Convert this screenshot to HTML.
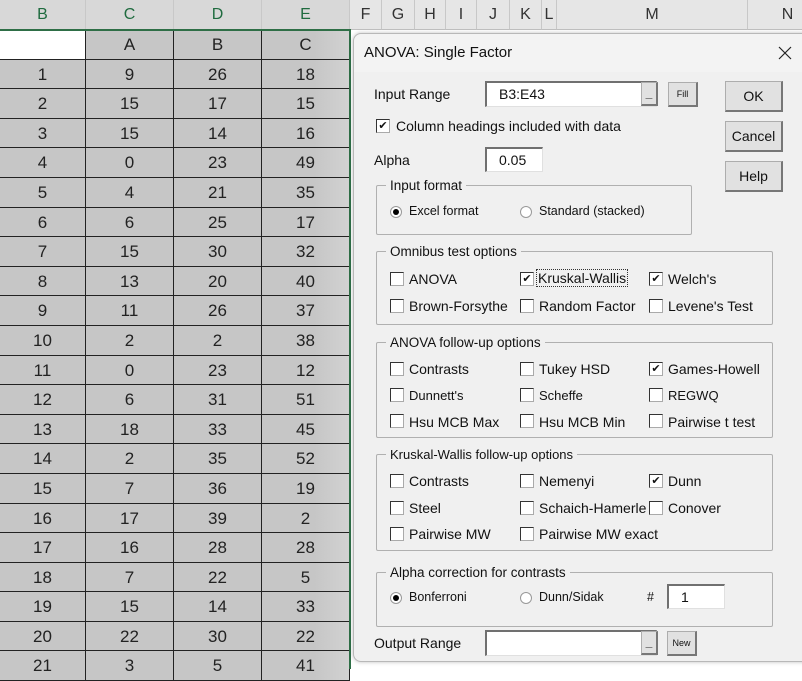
<!DOCTYPE html>
<html><head><meta charset="utf-8"><style>
*{box-sizing:border-box;margin:0;padding:0}
body{width:802px;height:668px;overflow:hidden;background:#fff;font-family:"Liberation Sans",sans-serif;position:relative}
.ch{position:absolute;top:0;height:30px;background:#e6e6e6;border-right:1px solid #c8c8c8;border-bottom:1px solid #c0c0c0;text-align:center;font-size:16px;line-height:30px;color:#333}
.ch.sel{color:#1f6b3f;background:#d8d8d8}
#grid{position:absolute;left:0;top:30px;width:350px;display:grid;grid-template-columns:86px 88px 88px 88px;grid-auto-rows:29.6px}
#grid div{background:#c6c6c6;border-right:1px solid #222;border-bottom:1px solid #222;text-align:center;font-size:17px;line-height:29px;color:#222}
#grid div:nth-child(4n){background:linear-gradient(90deg,#c6c6c6 60%,#d2d2d2)}
#selb{position:absolute;left:0;top:29px;width:351px;height:640px;border-right:2px solid #2e6e46;border-top:2px solid #2e6e46}
#dlg{position:absolute;left:353px;top:33px;width:460px;height:629px;background:#f0f0f0;border:1px solid #b8b8b8;border-radius:8px;box-shadow:0 0 4px rgba(0,0,0,.25);font-size:14px;color:#111}
#dlg .t{position:absolute;left:0;top:0;width:100%;height:38px;background:#f3f3f3;border-radius:8px 8px 0 0}
.a{position:absolute;white-space:nowrap}
.fld{position:absolute;background:#fff;border-top:2px solid #707070;border-left:2px solid #707070;border-right:1px solid #e0e0e0;border-bottom:1px solid #e0e0e0;font-size:14px;padding-left:12px;line-height:22px}
.btn{position:absolute;background:#e1e1e1;border:1px solid #adadad;border-right:2px solid #777;border-bottom:2px solid #777;text-align:center;font-size:14px}
.grp{position:absolute;border:1px solid #b0b0b0;border-radius:2px}
.grp span{position:absolute;left:9px;top:-8px;background:#f0f0f0;padding:0 4px;font-size:13.5px}
.cb{position:absolute;width:14px;height:14px;background:#fff;border:1px solid #333;border-right-color:#aaa;border-bottom-color:#aaa;font-size:11px;line-height:12px;text-align:center}
.lb{position:absolute;white-space:nowrap;font-size:14px}
.rd{position:absolute;width:12px;height:12px;border-radius:50%;background:#fff;border:1px solid #999}
.rd.on::after{content:"";position:absolute;left:2px;top:2px;width:6px;height:6px;border-radius:50%;background:#000}
</style></head><body>
<div class="ch sel" style="left:0;width:86px">B</div>
<div class="ch sel" style="left:86px;width:88px">C</div>
<div class="ch sel" style="left:174px;width:88px">D</div>
<div class="ch sel" style="left:262px;width:88px">E</div>
<div class="ch" style="left:350px;width:32px">F</div>
<div class="ch" style="left:382px;width:33px">G</div>
<div class="ch" style="left:415px;width:31px">H</div>
<div class="ch" style="left:446px;width:31px">I</div>
<div class="ch" style="left:477px;width:33px">J</div>
<div class="ch" style="left:510px;width:32px">K</div>
<div class="ch" style="left:542px;width:15px">L</div>
<div class="ch" style="left:557px;width:191px">M</div>
<div class="ch" style="left:748px;width:80px">N</div>
<div id="grid">
<div style="background:#fff"></div><div>A</div><div>B</div><div>C</div>
<div>1</div><div>9</div><div>26</div><div>18</div>
<div>2</div><div>15</div><div>17</div><div>15</div>
<div>3</div><div>15</div><div>14</div><div>16</div>
<div>4</div><div>0</div><div>23</div><div>49</div>
<div>5</div><div>4</div><div>21</div><div>35</div>
<div>6</div><div>6</div><div>25</div><div>17</div>
<div>7</div><div>15</div><div>30</div><div>32</div>
<div>8</div><div>13</div><div>20</div><div>40</div>
<div>9</div><div>11</div><div>26</div><div>37</div>
<div>10</div><div>2</div><div>2</div><div>38</div>
<div>11</div><div>0</div><div>23</div><div>12</div>
<div>12</div><div>6</div><div>31</div><div>51</div>
<div>13</div><div>18</div><div>33</div><div>45</div>
<div>14</div><div>2</div><div>35</div><div>52</div>
<div>15</div><div>7</div><div>36</div><div>19</div>
<div>16</div><div>17</div><div>39</div><div>2</div>
<div>17</div><div>16</div><div>28</div><div>28</div>
<div>18</div><div>7</div><div>22</div><div>5</div>
<div>19</div><div>15</div><div>14</div><div>33</div>
<div>20</div><div>22</div><div>30</div><div>22</div>
<div>21</div><div>3</div><div>5</div><div>41</div>
</div>
<div id="selb"></div>

<div id="dlg">
<div class="t"></div>
<div class="a" style="left:10px;top:10px;font-size:15px">ANOVA: Single Factor</div>
<svg class="a" style="left:424px;top:12px" width="14" height="14" viewBox="0 0 14 14"><path d="M1 1L13 13M13 1L1 13" stroke="#222" stroke-width="1.2" fill="none"/></svg>

<div class="a" style="left:20px;top:52px">Input Range</div>
<div class="fld" style="left:131px;top:47px;width:172px;height:26px">B3:E43</div>
<div class="btn" style="left:287px;top:48px;width:17px;height:24px;font-size:12px;line-height:20px;font-weight:bold">_</div>
<div class="btn" style="left:314px;top:48px;width:30px;height:25px;font-size:9px;line-height:22px">Fill</div>
<div class="btn" style="left:371px;top:47px;width:58px;height:31px;line-height:28px">OK</div>
<div class="btn" style="left:371px;top:87px;width:58px;height:31px;line-height:28px">Cancel</div>
<div class="btn" style="left:371px;top:127px;width:58px;height:31px;line-height:28px">Help</div>

<div class="cb" style="left:22px;top:85px">✔</div>
<div class="lb" style="left:42px;top:84px">Column headings included with data</div>
<div class="a" style="left:20px;top:118px">Alpha</div>
<div class="fld" style="left:131px;top:113px;width:58px;height:25px">0.05</div>

<div class="grp" style="left:22px;top:151px;width:316px;height:50px"><span>Input format</span></div>
<div class="rd on" style="left:36px;top:172px"></div>
<div class="lb" style="left:55px;top:170px;font-size:12.5px">Excel format</div>
<div class="rd" style="left:166px;top:172px"></div>
<div class="lb" style="left:185px;top:170px;font-size:12.5px">Standard (stacked)</div>

<div class="grp" style="left:22px;top:217px;width:397px;height:74px"><span>Omnibus test options</span></div>
<div class="cb" style="left:36px;top:238px"></div><div class="lb" style="left:55px;top:237px">ANOVA</div>
<div class="cb" style="left:166px;top:238px">✔</div><div class="lb" style="left:183px;top:236px;outline:1px dotted #333;padding:0 1px">Kruskal-Wallis</div>
<div class="cb" style="left:295px;top:238px">✔</div><div class="lb" style="left:314px;top:237px">Welch's</div>
<div class="cb" style="left:36px;top:265px"></div><div class="lb" style="left:55px;top:264px">Brown-Forsythe</div>
<div class="cb" style="left:166px;top:265px"></div><div class="lb" style="left:185px;top:264px">Random Factor</div>
<div class="cb" style="left:295px;top:265px"></div><div class="lb" style="left:314px;top:264px">Levene's Test</div>

<div class="grp" style="left:22px;top:308px;width:397px;height:96px"><span>ANOVA follow-up options</span></div>
<div class="cb" style="left:36px;top:328px"></div><div class="lb" style="left:55px;top:327px">Contrasts</div>
<div class="cb" style="left:166px;top:328px"></div><div class="lb" style="left:185px;top:327px">Tukey HSD</div>
<div class="cb" style="left:295px;top:328px">✔</div><div class="lb" style="left:314px;top:327px">Games-Howell</div>
<div class="cb" style="left:36px;top:354px"></div><div class="lb" style="left:55px;top:354px;font-size:13px">Dunnett's</div>
<div class="cb" style="left:166px;top:354px"></div><div class="lb" style="left:185px;top:354px;font-size:13px">Scheffe</div>
<div class="cb" style="left:295px;top:354px"></div><div class="lb" style="left:314px;top:354px;font-size:13px">REGWQ</div>
<div class="cb" style="left:36px;top:380px"></div><div class="lb" style="left:55px;top:380px">Hsu MCB Max</div>
<div class="cb" style="left:166px;top:380px"></div><div class="lb" style="left:185px;top:380px">Hsu MCB Min</div>
<div class="cb" style="left:295px;top:380px"></div><div class="lb" style="left:314px;top:380px">Pairwise t test</div>

<div class="grp" style="left:22px;top:420px;width:397px;height:97px"><span style="font-size:13px">Kruskal-Wallis follow-up options</span></div>
<div class="cb" style="left:36px;top:440px"></div><div class="lb" style="left:55px;top:439px">Contrasts</div>
<div class="cb" style="left:166px;top:440px"></div><div class="lb" style="left:185px;top:439px">Nemenyi</div>
<div class="cb" style="left:295px;top:440px">✔</div><div class="lb" style="left:314px;top:439px">Dunn</div>
<div class="cb" style="left:36px;top:467px"></div><div class="lb" style="left:55px;top:466px">Steel</div>
<div class="cb" style="left:166px;top:467px"></div><div class="lb" style="left:185px;top:466px">Schaich-Hamerle</div>
<div class="cb" style="left:295px;top:467px"></div><div class="lb" style="left:314px;top:466px">Conover</div>
<div class="cb" style="left:36px;top:493px"></div><div class="lb" style="left:55px;top:492px">Pairwise MW</div>
<div class="cb" style="left:166px;top:493px"></div><div class="lb" style="left:185px;top:492px">Pairwise MW exact</div>

<div class="grp" style="left:22px;top:538px;width:397px;height:55px"><span>Alpha correction for contrasts</span></div>
<div class="rd on" style="left:36px;top:558px"></div>
<div class="lb" style="left:55px;top:556px;font-size:12.5px">Bonferroni</div>
<div class="rd" style="left:166px;top:558px"></div>
<div class="lb" style="left:185px;top:556px;font-size:12.5px">Dunn/Sidak</div>
<div class="lb" style="left:293px;top:556px;font-size:12.5px">#</div>
<div class="fld" style="left:313px;top:550px;width:58px;height:25px">1</div>

<div class="a" style="left:20px;top:601px">Output Range</div>
<div class="fld" style="left:131px;top:596px;width:172px;height:26px"></div>
<div class="btn" style="left:287px;top:597px;width:17px;height:24px;font-size:12px;line-height:20px;font-weight:bold">_</div>
<div class="btn" style="left:313px;top:597px;width:30px;height:25px;font-size:9px;line-height:22px">New</div>
</div>
</body></html>
